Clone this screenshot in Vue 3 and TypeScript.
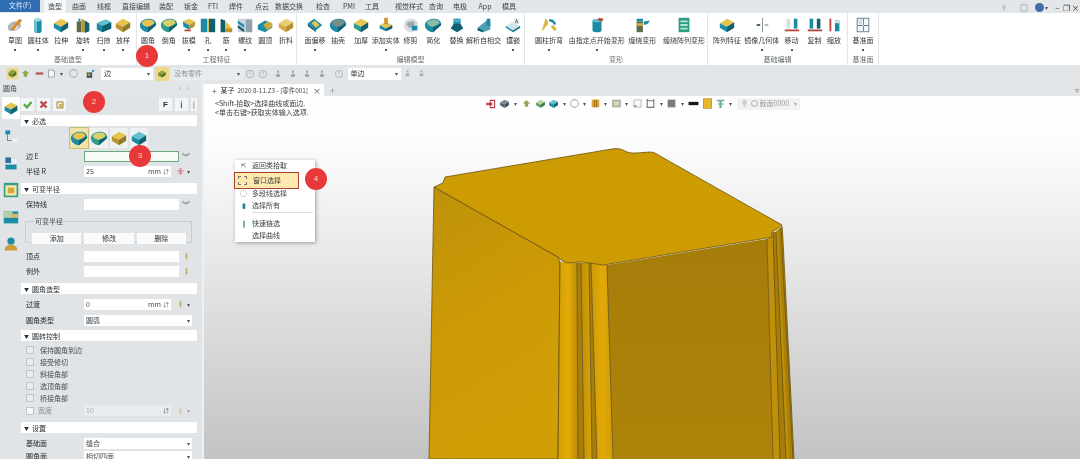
<script setup lang="ts">
import { h } from 'vue'

type Part = [string, string]

const TEAL = '#1c8ba5'
const DEEP = '#10606f'
const SKY = '#63c0d0'
const GOLD = '#e7c44e'
const OCHRE = '#b8952e'
const GREY = '#aeb8be'
const RED = '#b8423c'

const block = (top: string, left: string, right: string): Part[] => [
  ['M2 8l8-5 8 4-8 5Z', top],
  ['M2 8l8 4v6l-8-5Z', left],
  ['M10 12l8-5v6l-8 5Z', right],
]

const round = (top: string, left: string, right: string): Part[] => [
  ['M1 10C1 6 6 3 11 3c4 0 8 2 8 6 0 2-2 3-4 5l-5 4C6 18 1 15 1 10Z', left],
  ['M10 12c3-1 6-2 9-4v2l-9 8Z', right],
  ['M3 8c1-3 5-4 8-4 3 0 6 1 6 4-2 2-5 3-7 4-3 0-6-2-7-4Z', top],
]

const shapes: Record<string, Part[]> = {
  sketch: [
    ['M2 13c0-5 6-8 11-7s5 6 0 9-11 2-11-2Z', GREY],
    ['M6 13c0-2 3-4 6-3s1 5-2 5-4 0-4-2Z', '#eef1f3'],
    ['M6 13L15 3l3 2-9 10-4 1Z', '#d58d2c'],
  ],
  cyl: [
    ['M6 4h8v13a4 2 0 0 1-8 0Z', TEAL],
    ['M6 4h3v15c-2 0-3-1-3-2Z', SKY],
    ['M6 4a4 2 0 0 1 8 0 4 2 0 0 1-8 0', '#a5dbe4'],
  ],
  extrude: block(GOLD, TEAL, DEEP),
  revolve: [
    ['M3 6h5v12H3Z', '#5b6a44'],
    ['M8 3l4 2v13H8Z', OCHRE],
    ['M12 5l5 3v9l-5 2Z', DEEP],
    ['M5 3h2v3H5Z', TEAL],
  ],
  sweep: [
    ['M2 8l10-4 6 3v7L8 18l-6-3Z', TEAL],
    ['M8 11l10-4v7L8 18Z', DEEP],
    ['M2 8l10-4 6 3-10 4Z', SKY],
  ],
  loft: block(GOLD, OCHRE, '#8d7a2d'),
  fillet: round(GOLD, TEAL, DEEP),
  chamfer: round('#d8d06a', '#2a9c8f', DEEP),
  draft: [
    ['M3 6l7-3 7 3-7 4Z', GOLD],
    ['M3 6l7 4v5l-6-3Z', TEAL],
    ['M10 10l7-4-1 6-6 3Z', OCHRE],
    ['M5 15h7v2H5Z', RED],
  ],
  hole: [
    ['M2 3h7v15H2Z', TEAL],
    ['M9 3h2v15H9Z', GOLD],
    ['M11 3h7v15h-7Z', DEEP],
  ],
  rib: [
    ['M4 3l5 2v13H4Z', DEEP],
    ['M9 11l8 3v4H9Z', OCHRE],
    ['M9 5l8 9H9Z', GOLD],
  ],
  thread: [
    ['M2 3h16v15H2Z', '#c9d2d8'],
    ['M2 5l7 5v3L2 8Z', TEAL],
    ['M2 10l7 5v3l-7-5Z', DEEP],
    ['M11 4h7v14h-7Z', '#8fa3ad'],
  ],
  dome: [
    ['M2 10l8-5 8 3v5l-8 5-8-3Z', TEAL],
    ['M8 10l5-4 5 2v4l-5 4Z', '#c8ac3e'],
  ],
  fold: block('#eacb72', '#d5ad47', '#b88f32'),
  offset: [
    ['M2 8l7-5 9 7-7 6Z', TEAL],
    ['M6 8l4-3 5 5-4 3Z', GOLD],
    ['M2 8l9 8v2l-9-7Z', DEEP],
  ],
  shell: round('#7b8b85', TEAL, DEEP),
  thicken: block(GOLD, '#2f9a8f', DEEP),
  addsolid: [
    ['M3 10l7-3 7 3-7 4Z', GOLD],
    ['M3 10l7 4v3l-7-3Z', TEAL],
    ['M10 14l7-4v4l-7 3Z', DEEP],
    ['M8 2h4v7H8Z', '#d58d2c'],
  ],
  trim: [
    ['M2 10c0-5 5-7 9-7s7 3 7 7-4 8-8 8-8-3-8-8Z', '#d7dde0'],
    ['M5 9c2-3 6-4 9-2v5c-3 2-7 2-9-3Z', '#9ba9ae'],
    ['M11 11h6v5h-6Z', TEAL],
  ],
  simplify: round('#8ab9a4', TEAL, DEEP),
  replace: [
    ['M6 3h8v6H6Z', TEAL],
    ['M6 9h8l3 5-7 4-7-4Z', DEEP],
    ['M6 3l4 2 4-2v2l-4 2-4-2Z', SKY],
  ],
  intersect: [
    ['M3 13l10-8 4 2v8l-8 3-6-2Z', '#4d9fb5'],
    ['M13 3h4v8h-4Z', TEAL],
    ['M3 13l6 3v2l-6-2Z', DEEP],
  ],
  emboss: [
    ['M2 11l8-4 8 4-8 5Z', '#cfe5ea'],
    ['M2 11l8 5v2l-8-5Z', TEAL],
    ['M10 16l8-5v2l-8 5Z', DEEP],
    ['M11 2h6v7h-6Z', '#eef1f3'],
    ['M12 8l2-5 2 5h-1l-1-3-1 3Z', '#44525a'],
  ],
  bend: [
    ['M6 3c2 0 3 3 3 6l-6 7h12l-3-5c3-2 4 0 6 3v2H2l2-6c1-2 1-5 2-7Z', '#d9b63c'],
    ['M10 4c4-1 6 1 8 5l-2 1c-2-3-3-4-6-4Z', TEAL],
  ],
  point: [
    ['M5 5h10v11a5 2 0 0 1-10 0Z', TEAL],
    ['M5 5a5 2 0 0 1 10 0 5 2 0 0 1-10 0', SKY],
    ['M12 2l5 1-1 3-5-1Z', RED],
  ],
  wrap: [
    ['M4 6h7v12H4Z', '#5f6b4c'],
    ['M4 8h7v3H4Z', '#d9a948'],
    ['M4 3h7v3H4Z', TEAL],
    ['M12 6l7-1-3 4-4 1Z', TEAL],
  ],
  wraparray: [
    ['M4 2h12v16H4Z', '#2c9c83'],
    ['M6 5h8v2H6ZM6 9h8v2H6ZM6 13h8v2H6Z', '#b9e3d3'],
  ],
  pattern: block(GOLD, TEAL, DEEP),
  mirror: [
    ['M10 2h1v16h-1Z', '#7f8b92'],
    ['M4 9h4v2H4Z', '#44525a'],
    ['M13 9h4v2h-4Z', '#a8b4ba'],
  ],
  move: [
    ['M4 3h4v11H4Z', '#d6dcdf'],
    ['M12 3h4v11h-4Z', TEAL],
    ['M2 15h16v2H2Z', RED],
  ],
  copy: [
    ['M4 3h4v11H4Z', TEAL],
    ['M12 3h4v11h-4Z', DEEP],
    ['M2 15h16v2H2Z', RED],
  ],
  scale: [
    ['M5 3h2v14H5Z', RED],
    ['M11 5h5v12h-5Z', TEAL],
    ['M11 5h5v3h-5Z', '#d6dcdf'],
  ],
  plane: [
    ['M3 2h14v16H3Z', '#5d7f88'],
    ['M4 3h12v14H4Z', '#f4f6f7'],
    ['M10 3h1v14h-1ZM4 10h12v1H4Z', '#5d7f88'],
    ['M5 4h4v5H5Z', '#cfe0e4'],
  ],
  picker: [
    ['M1 1h18v18H1Z', '#ecd98a'],
    ['M4 8l6-4 6 3-6 4Z', '#8aa33d'],
    ['M4 8l6 3v5l-6-3Z', '#6b8a2f'],
    ['M10 11l6-4v5l-6 4Z', '#48701f'],
  ],
  arrow: [['M10 4l7 6h-4v6H7v-6H3Z', '#8aa84d']],
  minus: [['M3 8h14v4H3Z', '#b4505a']],
  sheet: [
    ['M4 3h9l3 3v11H4Z', '#f4f6f7'],
    ['M4 3h9l3 3v11H4Zm1 1v12h10V7l-3-3Z', '#5d6a72'],
  ],
  ring: [['M10 2a8 8 0 1 0 0 16 8 8 0 0 0 0-16Zm0 2a6 6 0 1 1 0 12 6 6 0 0 1 0-12Z', '#a9b2b7']],
  flag: [
    ['M3 8h10v10H3Z', '#4a565d'],
    ['M13 3l5 2-5 3Z', TEAL],
    ['M5 10h4v4H5Z', '#c9a227'],
  ],
  clock: [
    ['M10 2a8 8 0 1 0 0 16 8 8 0 0 0 0-16Zm0 2a6 6 0 1 1 0 12 6 6 0 0 1 0-12Z', '#a3acb1'],
    ['M9 5h2v6H9Z', '#a3acb1'],
  ],
  dim: [['M8 3h4v5H8ZM6 10h8v6H6Z', '#8d989e']],
  tick: [['M2 11l3-3 4 4 7-8 3 3L9 18Z', '#5aa54a']],
  cross: [['M3 6l3-3 4 4 4-4 3 3-4 4 4 4-3 3-4-4-4 4-3-3 4-4Z', '#c2494c']],
  apply: [
    ['M3 3h14v14H3Z', '#9f8a3d'],
    ['M5 5h10v10H5Z', '#f4efd6'],
    ['M8 8h7v7H8Z', '#cdb55a'],
  ],
  exit: [
    ['M8 3h9v14H8v-3h2v1h5V5h-5v1H8Z', '#b8424e'],
    ['M2 8h6V5l5 5-5 5v-3H2Z', '#b8424e'],
  ],
  shade: block('#7a8a97', '#51616d', '#3d4b55'),
  viewcube: block('#b7d9a0', '#6ba04c', '#3d7d5f'),
  bluecube: block(SKY, TEAL, DEEP),
  orange: [
    ['M3 3h14v14H3Z', '#e2a63a'],
    ['M7 3h2v14H7ZM11 3h2v14h-2Z', '#a3691f'],
  ],
  photo: [
    ['M2 3h16v14H2Z', '#aab39a'],
    ['M5 6h10v8H5Z', '#d3d8c0'],
  ],
  frame: [
    ['M3 3h14v14H3Z', '#7f8b92'],
    ['M4 4h12v12H4Z', '#f7f8f8'],
    ['M4 13h4v3H4Z', '#7f8b92'],
  ],
  cupframe: [['M3 2h2v2h10V2h2v16H3Zm2 4v10h10V6Z', '#6a757c']],
  greycube: [['M3 3h14v14H3Z', '#757d85']],
  blackbar: [['M1 7h18v6H1Z', '#15181a']],
  yellow: [
    ['M2 1h16v18H2Z', '#e7b52c'],
    ['M2 1h16v18H2Zm1 1v16h14V2Z', '#a8842a'],
  ],
  anchor: [['M3 3h14v3h-5v4h4v2h-4v6H8v-6H5v-2h3V6H3Z', '#6fa8a0']],
  tip: [['M10 2a5 5 0 0 0-3 9v3h6v-3a5 5 0 0 0-3-9ZM8 15h4v3H8Z', '#c4cacd']],
  pin: [['M8 3h4v8l3 2H5l3-2ZM9 13h2v5H9Z', '#c2ad6b']],
  pink: [['M8 2h4v5h5v3h-5v3h3l-5 5-5-5h3v-3H3V7h5Z', '#cf8a94']],
  tabfx: block(GOLD, TEAL, DEEP),
  tabtree: [
    ['M3 3h6v5H3Z', TEAL],
    ['M11 13h7v5h-7Z', '#eef1f3'],
    ['M5 8h1v7h5v1H5Z', '#5c6870'],
  ],
  tabhist: [
    ['M3 3h7v7H3Z', '#2f6f9c'],
    ['M3 12h14v6H3Z', TEAL],
    ['M12 5h5v5h-5Z', '#eef1f3'],
  ],
  tabframe: [
    ['M1 1h18v18H1Z', '#2f9c8e'],
    ['M3 4h14v13H3Z', '#f6e7a3'],
    ['M6 7h8v7H6Z', '#cda938'],
  ],
  tabscene: [
    ['M1 3h18v15H1Z', TEAL],
    ['M1 3h11v8H1Z', '#b8cfa6'],
    ['M11 6h8v5h-8Z', '#dab66a'],
  ],
  tabuser: [
    ['M10 2a4 4 0 1 1 0 9 4 4 0 0 1 0-9Z', TEAL],
    ['M2 18c0-5 4-7 8-7s8 2 8 7Z', '#c9a03a'],
  ],
}

const Ico = (props: { name: string; size?: number }) =>
  h(
    'svg',
    { viewBox: '0 0 20 20', width: props.size ?? 20, height: props.size ?? 20, class: 'ico' },
    (shapes[props.name] ?? []).map(([d, fill]) => h('path', { d, fill, 'fill-rule': 'evenodd' })),
  )
Ico.props = ['name', 'size']

const menus = [
  ['造型', 55], ['曲面', 79], ['线框', 104], ['直接编辑', 136], ['装配', 166], ['钣金', 191], ['FTI', 213],
  ['焊件', 236], ['点云', 262], ['数据交换', 289], ['检查', 323], ['PMI', 349], ['工具', 372], ['视觉样式', 409],
  ['查询', 436], ['电极', 460], ['App', 485], ['模具', 509],
] as const

interface Item { x: number; label?: string; icon?: string; drop?: boolean; w?: number; combo?: string; arrow?: boolean }

// widths from the midpoints between neighbouring centres, so the row stays plain flow
function spaced<T extends Item>(items: T[], solo = 24) {
  return items.map((it, i) => {
    const prev = items[i - 1]
    const next = items[i + 1]
    if (!prev && !next) return { ...it, w: solo }
    const left = prev ? (prev.x + it.x) / 2 : 0
    const right = next ? (it.x + next.x) / 2 : 0
    return { ...it, w: prev && next ? right - left : prev ? (it.x - left) * 2 : (right - it.x) * 2 }
  })
}

const groups = [
  {
    name: '基础造型', start: 0, end: 137,
    items: [
      { x: 15, label: '草图', icon: 'sketch', drop: true },
      { x: 38, label: '圆柱体', icon: 'cyl', drop: true },
      { x: 62, label: '拉伸', icon: 'extrude' },
      { x: 83, label: '旋转', icon: 'revolve', drop: true },
      { x: 104, label: '扫掠', icon: 'sweep', drop: true },
      { x: 123, label: '放样', icon: 'loft', drop: true },
    ],
  },
  {
    name: '工程特征', start: 137, end: 297,
    items: [
      { x: 148, label: '圆角', icon: 'fillet' },
      { x: 169, label: '倒角', icon: 'chamfer' },
      { x: 189, label: '拔模', icon: 'draft', drop: true },
      { x: 208, label: '孔', icon: 'hole', drop: true },
      { x: 226, label: '筋', icon: 'rib', drop: true },
      { x: 245, label: '螺纹', icon: 'thread', drop: true },
      { x: 265, label: '圆顶', icon: 'dome' },
      { x: 286, label: '折料', icon: 'fold' },
    ],
  },
  {
    name: '编辑模型', start: 297, end: 525,
    items: [
      { x: 315, label: '面偏移', icon: 'offset', drop: true },
      { x: 338, label: '抽壳', icon: 'shell' },
      { x: 361, label: '加厚', icon: 'thicken' },
      { x: 385, label: '添加实体', icon: 'addsolid', drop: true },
      { x: 412, label: '修剪', icon: 'trim' },
      { x: 433, label: '简化', icon: 'simplify' },
      { x: 455, label: '替换', icon: 'replace' },
      { x: 483, label: '解析自相交', icon: 'intersect' },
      { x: 513, label: '镶嵌', icon: 'emboss', drop: true },
    ],
  },
  {
    name: '变形', start: 525, end: 708,
    items: [
      { x: 545, label: '圆柱折弯', icon: 'bend', drop: true },
      { x: 593, label: '由指定点开始变形', icon: 'point', drop: true },
      { x: 640, label: '缠绕变形', icon: 'wrap' },
      { x: 680, label: '缠绕阵列变形', icon: 'wraparray' },
    ],
  },
  {
    name: '基础编辑', start: 708, end: 848,
    items: [
      { x: 727, label: '阵列特征', icon: 'pattern' },
      { x: 763, label: '镜像几何体', icon: 'mirror', drop: true },
      { x: 794, label: '移动', icon: 'move', drop: true },
      { x: 815, label: '复制', icon: 'copy' },
      { x: 834, label: '缩放', icon: 'scale' },
    ],
  },
  {
    name: '基准面', start: 848, end: 879,
    items: [{ x: 863, label: '基准面', icon: 'plane', drop: true }],
  },
].map((g) => ({ ...g, items: spaced(g.items) }))

const strip = spaced([
  { x: 12, icon: 'picker' },
  { x: 26, icon: 'arrow' },
  { x: 39, icon: 'minus' },
  { x: 52, icon: 'sheet' },
  { x: 61, arrow: true },
  { x: 72, icon: 'ring' },
  { x: 90, icon: 'flag' },
])
const stripEnd = spaced([
  { x: 247, icon: 'clock' },
  { x: 260, icon: 'clock' },
  { x: 276, icon: 'dim' },
  { x: 290, icon: 'dim' },
  { x: 304, icon: 'dim' },
  { x: 318, icon: 'dim' },
  { x: 336, icon: 'clock' },
])

const viewbar = spaced([
  { x: 490, icon: 'exit' },
  { x: 504, icon: 'shade' },
  { x: 514, arrow: true },
  { x: 525, icon: 'arrow' },
  { x: 539, icon: 'viewcube' },
  { x: 553, icon: 'bluecube' },
  { x: 563, arrow: true },
  { x: 574, icon: 'ring' },
  { x: 583, arrow: true },
  { x: 595, icon: 'orange' },
  { x: 604, arrow: true },
  { x: 616, icon: 'photo' },
  { x: 624, arrow: true },
  { x: 636, icon: 'frame' },
  { x: 651, icon: 'cupframe' },
  { x: 659, arrow: true },
  { x: 672, icon: 'greycube' },
  { x: 680, arrow: true },
  { x: 692, icon: 'blackbar' },
  { x: 707, icon: 'yellow' },
  { x: 720, icon: 'anchor' },
  { x: 729, arrow: true },
])

const sideTabs = ['tabfx', 'tabtree', 'tabhist', 'tabframe', 'tabscene', 'tabuser']
const checks = ['保持圆角到边', '接受修切', '斜接角部', '选顶角部', '桥接角部']
const menuItems = ['多段线选择', '选择所有']
</script>

<template>
  <div class="app">
    <!-- top menu -->
    <div class="menubar">
      <div class="file">文件(F)</div>
      <div class="active-tab"></div>
      <span
        v-for="m in menus"
        :key="m[0]"
        class="menu"
        :style="{ left: m[1] + 'px' }"
      >{{ m[0] }}</span>
      <div class="winbtns">
        <Ico name="tip" :size="8" />
        <span class="ring-wrap"><Ico name="ring" :size="10" /></span>
        <span class="globe"></span>
        <span class="dd">▾</span>
        <span class="wb">–</span>
        <span class="wb">❐</span>
        <span class="wb">×</span>
      </div>
    </div>

    <!-- ribbon -->
    <div class="ribbon">
      <div
        v-for="g in groups"
        :key="g.name"
        class="group"
        :style="{ width: g.end - g.start + 'px' }"
      >
        <div class="group-items" :style="{ paddingLeft: g.items[0].x - g.items[0].w / 2 - g.start + 'px' }">
          <div v-for="it in g.items" :key="it.label" class="ritem" :style="{ width: it.w + 'px' }">
            <Ico :name="it.icon!" :size="18" />
            <span class="rlabel">{{ it.label }}</span>
            <span v-if="it.drop" class="rdot"></span>
          </div>
        </div>
        <div class="group-name">{{ g.name }}</div>
      </div>
    </div>

    <!-- selection toolbar -->
    <div class="strip">
      <div class="slots">
        <div v-for="(s, i) in strip" :key="i" class="slot" :style="{ width: s.w + 'px' }">
          <Ico v-if="s.icon" :name="s.icon" :size="s.icon === 'picker' ? 13 : 11" />
          <span v-else class="dd">▾</span>
        </div>
      </div>
      <div class="combo edge"><span>边</span><span class="dd">▾</span></div>
      <div class="slot wide"><span class="picked"><Ico name="picker" :size="12" /></span></div>
      <div class="combo parts"><span>没有零件</span><span class="dd">▾</span></div>
      <div class="slots dim">
        <div v-for="(s, i) in stripEnd" :key="i" class="slot" :style="{ width: s.w + 'px' }">
          <Ico :name="s.icon!" :size="10" />
        </div>
      </div>
      <div class="combo single"><span>单边</span><span class="dd">▾</span></div>
      <div class="slot tail"><Ico name="dim" :size="9" /></div>
      <div class="slot tail"><Ico name="dim" :size="9" /></div>
    </div>

    <div class="work">
      <!-- fillet panel -->
      <aside class="panel">
        <div class="panel-title">
          <span>圆角</span>
          <span class="pins">▫ ▫</span>
        </div>
        <div class="panel-main">
          <div class="side-tabs">
            <div v-for="(t, i) in sideTabs" :key="t" class="side-tab" :class="{ on: i === 0 }">
              <Ico :name="t" :size="16" />
            </div>
          </div>
          <div class="form">
            <div class="actions">
              <span class="act"><Ico name="tick" :size="11" /></span>
              <span class="act"><Ico name="cross" :size="11" /></span>
              <span class="act"><Ico name="apply" :size="10" /></span>
              <span class="act right bold">F</span>
              <span class="act info">i</span>
              <span class="act thin">|</span>
            </div>

            <div class="section first"><i>▼</i>必选</div>
            <div class="types">
              <span class="type on"><Ico name="fillet" :size="18" /></span>
              <span class="type"><Ico name="chamfer" :size="18" /></span>
              <span class="type"><Ico name="loft" :size="18" /></span>
              <span class="type"><Ico name="bluecube" :size="18" /></span>
            </div>
            <div class="field mt3">
              <label>边 E</label>
              <div class="input green"></div>
              <span class="more">︾</span>
            </div>
            <div class="field mt4">
              <label>半径 R</label>
              <div class="input short"><span>25</span><span class="unit">mm</span><span class="spin">⇵</span></div>
              <span class="side"><Ico name="pink" :size="9" /><span class="dd">▾</span></span>
            </div>

            <div class="section"><i>▼</i>可变半径</div>
            <div class="field mt5">
              <label>保持线</label>
              <div class="input"></div>
              <span class="more">︾</span>
            </div>
            <fieldset class="box">
              <legend>可变半径</legend>
              <button>添加</button>
              <button>修改</button>
              <button>删除</button>
            </fieldset>
            <div class="field mt8">
              <label>顶点</label>
              <div class="input"></div>
              <span class="more"><Ico name="pin" :size="9" /></span>
            </div>
            <div class="field mt4">
              <label>例外</label>
              <div class="input"></div>
              <span class="more"><Ico name="pin" :size="9" /></span>
            </div>

            <div class="section"><i>▼</i>圆角造型</div>
            <div class="field mt5">
              <label>过渡</label>
              <div class="input short"><span>0</span><span class="unit">mm</span><span class="spin">⇵</span></div>
              <span class="side"><Ico name="pin" :size="9" /><span class="dd">▾</span></span>
            </div>
            <div class="field mt5">
              <label>圆角类型</label>
              <div class="input wide"><span>圆弧</span><span class="dd end">▾</span></div>
            </div>

            <div class="section tight"><i>▼</i>圆转控制</div>
            <div class="checks">
              <div v-for="c in checks" :key="c" class="check"><span class="cb"></span>{{ c }}</div>
            </div>
            <div class="field mt1">
              <label class="with-cb"><span class="cb light"></span>宽度</label>
              <div class="input short off"><span>10</span><span class="spin">⇵</span></div>
              <span class="side faded"><Ico name="pin" :size="9" /><span class="dd">▾</span></span>
            </div>

            <div class="section"><i>▼</i>设置</div>
            <div class="field mt5">
              <label>基础面</label>
              <div class="input wide"><span>缝合</span><span class="dd end">▾</span></div>
            </div>
            <div class="field mt2">
              <label>圆角面</label>
              <div class="input wide"><span>相切四面</span><span class="dd end">▾</span></div>
            </div>
          </div>
        </div>
      </aside>

      <main class="main">
        <div class="doc-tabs">
          <div class="doc-tab">
            <span class="plus">+</span><span class="doc-name">某子</span><span class="doc-file">2020 8-11.Z3 - [零件001]</span><span class="close">×</span>
          </div>
          <span class="add">+</span>
          <span class="collapse">▿</span>
        </div>
        <div class="canvas">
          <!-- the part: free canvas, coordinates are the scene itself -->
          <svg class="scene" viewBox="204 96 876 363" width="876" height="363">
            <defs>
              <linearGradient id="leftFace" x1="0" y1="0" x2="0.3" y2="1">
                <stop offset="0" stop-color="#bd9109" />
                <stop offset="0.45" stop-color="#cb9907" />
                <stop offset="1" stop-color="#d09e05" />
              </linearGradient>
              <linearGradient id="rightFace" x1="0" y1="0" x2="0" y2="1">
                <stop offset="0" stop-color="#a67d0a" />
                <stop offset="1" stop-color="#ae8309" />
              </linearGradient>
              <linearGradient id="fluteA" x1="0" y1="0" x2="1" y2="0">
                <stop offset="0" stop-color="#d3a006" />
                <stop offset="0.5" stop-color="#e3aa08" />
                <stop offset="1" stop-color="#b98c08" />
              </linearGradient>
              <linearGradient id="fluteB" x1="0" y1="0" x2="1" y2="0">
                <stop offset="0" stop-color="#bd8f08" />
                <stop offset="1" stop-color="#d9a408" />
              </linearGradient>
              <linearGradient id="fluteC" x1="0" y1="0" x2="1" y2="0">
                <stop offset="0" stop-color="#cb9a07" />
                <stop offset="0.5" stop-color="#e2aa08" />
                <stop offset="1" stop-color="#cf9d06" />
              </linearGradient>
            </defs>
            <path d="M434 187L558 257 560 262 558 459H429Z" fill="url(#leftFace)" stroke="#6f5510" stroke-width="0.8" />
            <path d="M560 262L577 263 578 459H558Z" fill="url(#fluteA)" />
            <path d="M577 263L581 263 584 459 578 459Z" fill="#a87f0a" />
            <path d="M581 263L589 263 592 459 584 459Z" fill="url(#fluteB)" />
            <path d="M589 263L591 263 597 459 592 459Z" fill="#a87f0a" />
            <path d="M591 263L607 265 613 459 597 459Z" fill="url(#fluteC)" />
            <path d="M607 265L767 239 773 459H613Z" fill="url(#rightFace)" />
            <path d="M767 239L782 226 783 240 794 459H773Z" fill="#c09108" />
            <path d="M773 232L776 232 786 459H780Z" fill="#a57d0a" />
            <path d="M778 230L781 228 793 459H789Z" fill="#a8800a" />
            <path
              d="M434 187L443 183 445 177 612 149C617 148 622 149 625 151 630 154 636 153 650 152 654 152 657 154 660 156L782 225 777 229 772 232 772 237 767 238 603 265 590 263 580 262 567 263C563 262 560 259 558 257Z"
              fill="#cd9c02"
              stroke="#6b5210"
              stroke-width="0.8"
              stroke-linejoin="round"
            />
            <g fill="none" stroke="#6a5010" stroke-width="0.8">
              <path d="M560 262L558 459" />
              <path d="M577 263L578 459" />
              <path d="M581 263L584 459" />
              <path d="M589 263L592 459" />
              <path d="M591 263L597 459" />
              <path d="M607 265L613 459" />
              <path d="M767 239L773 459" />
              <path d="M773 232L780 459" />
              <path d="M776 232L786 459" />
              <path d="M781 228L793 459" />
              <path d="M782 226L783 240 794 459" />
            </g>
          </svg>

          <div class="hints">
            <div>&lt;Shift-拾取&gt;选择曲线或面边.</div>
            <div>&lt;单击右键&gt;获取实体输入选项.</div>
          </div>

          <div class="viewbar">
            <div v-for="(s, i) in viewbar" :key="i" class="slot" :style="{ width: s.w + 'px' }">
              <Ico v-if="s.icon" :name="s.icon" :size="s.icon === 'exit' ? 12 : 11" />
              <span v-else class="dd">▾</span>
            </div>
            <div class="section-box"><Ico name="tip" :size="9" /><span class="ring-o"></span>截面0000<span class="dd">▾</span></div>
          </div>
        </div>
      </main>
    </div>

    <!-- context menu with highlighted entry -->
    <div class="ctx">
      <div class="ctx-row head"><span class="ctx-ic">⇱</span>返回类拾取</div>
      <div class="ctx-row hot"><span class="ctx-box"></span>窗口选择</div>
      <div v-for="(m, i) in menuItems" :key="m" class="ctx-row">
        <span class="ctx-ic" :class="{ teal: i === 1 }">{{ i === 0 ? '◯' : '▮' }}</span>{{ m }}
      </div>
      <div class="ctx-sep"></div>
      <div class="ctx-row"><span class="ctx-ic teal">❙</span>快速链选</div>
      <div class="ctx-row"><span class="ctx-ic"></span>选择曲线</div>
    </div>

    <span class="badge b1">1</span>
    <span class="badge b2">2</span>
    <span class="badge b3">3</span>
    <span class="badge b4">4</span>
  </div>
</template>

<style scoped>
.app {
  position: relative;
  width: 1080px;
  height: 459px;
  overflow: hidden;
  display: flex;
  flex-direction: column;
  background: #e3e6e8;
  color: #2c3033;
  font: 7px "Noto Sans CJK SC", "Liberation Sans", sans-serif;
  line-height: 11px;
  filter: blur(0.3px);
}

.ico {
  display: block;
  flex: none;
}

.dd {
  font-size: 6px;
  color: #555;
}

/* menu */
.menubar {
  position: relative;
  flex: none;
  height: 13px;
  background: #e4e7e9;
}

.file {
  width: 40px;
  height: 12px;
  background: #2f6db3;
  color: #dfe9f5;
  text-align: center;
}

.active-tab {
  position: absolute;
  left: 44px;
  top: 0;
  width: 22px;
  height: 13px;
  background: #f6f7f8;
}

.menu {
  position: absolute;
  top: 1px;
  transform: translateX(-50%);
  white-space: nowrap;
  color: #3f4447;
}

.winbtns {
  position: absolute;
  right: 0;
  top: 2px;
  display: flex;
  align-items: center;
  color: #444;
}

.ring-wrap {
  margin-left: 11px;
}

.globe {
  width: 9px;
  height: 9px;
  margin-left: 6px;
  border-radius: 50%;
  background: #3f6ea8;
}

.winbtns .dd {
  margin: 0 5px 0 1px;
}

.wb {
  width: 9px;
  text-align: center;
  font-size: 8px;
  color: #333;
}

/* ribbon */
.ribbon {
  flex: none;
  display: flex;
  height: 52px;
  background: #fff;
}

.group {
  position: relative;
  flex: none;
  border-right: 1px solid #e3e6e8;
  box-sizing: border-box;
}

.group-items {
  display: flex;
  height: 41px;
  padding-top: 3px;
}

.ritem {
  flex: none;
  display: flex;
  flex-direction: column;
  align-items: center;
  white-space: nowrap;
}

.rlabel {
  margin-top: 1px;
  color: #33373a;
}

.rdot {
  width: 2px;
  height: 2px;
  margin-top: 3px;
  background: #555;
}

.group-name {
  position: absolute;
  bottom: 0;
  left: 0;
  right: 0;
  text-align: center;
  color: #666b6f;
}

/* selection strip */
.strip {
  flex: none;
  display: flex;
  align-items: center;
  height: 17px;
  padding-left: 5px;
}

.slots {
  display: flex;
  align-items: center;
}

.slot {
  flex: none;
  display: flex;
  align-items: center;
  justify-content: center;
}

.slot.wide {
  width: 18px;
}

.slot.tail {
  width: 14px;
  opacity: 0.7;
}

.picked {
  background: #ecd98a;
  padding: 1px;
}

.combo {
  flex: none;
  display: flex;
  align-items: center;
  justify-content: space-between;
  box-sizing: border-box;
  height: 12px;
  padding: 0 3px;
  background: #fff;
  color: #333;
}

.combo.edge {
  width: 52px;
  margin-left: 2px;
}

.combo.parts {
  width: 72px;
  background: #e9ecee;
  color: #8c9194;
}

.combo.single {
  width: 53px;
}

.dim {
  opacity: 0.75;
}

/* workspace */
.work {
  flex: 1;
  display: flex;
  min-height: 0;
}

.panel {
  flex: none;
  width: 202px;
  display: flex;
  flex-direction: column;
  background: #e0e4e6;
  border-right: 2px solid #eef0f1;
  box-sizing: content-box;
}

.panel-title {
  flex: none;
  display: flex;
  justify-content: space-between;
  height: 14px;
  padding: 1px 10px 0 3px;
  box-sizing: border-box;
  color: #44484b;
  background: #e3e6e8;
}

.pins {
  color: #8b9196;
}

.panel-main {
  flex: 1;
  display: flex;
}

.side-tabs {
  flex: none;
  width: 20px;
  padding-top: 1px;
  display: flex;
  flex-direction: column;
  align-items: center;
  gap: 7px;
}

.side-tab {
  width: 18px;
  height: 20px;
  display: flex;
  align-items: center;
  justify-content: center;
  margin-left: 2px;
}

.side-tab.on {
  background: #fff;
  height: 22px;
}

.form {
  flex: 1;
  width: 177px;
  padding-right: 5px;
  padding-left: 1px;
  box-sizing: border-box;
}

.actions {
  display: flex;
  align-items: center;
  height: 15px;
  margin-top: 1px;
  gap: 3px;
  padding-left: 0;
}

.act {
  width: 13px;
  height: 13px;
  display: flex;
  align-items: center;
  justify-content: center;
  background: #f4f5f6;
}

.act.right {
  margin-left: auto;
}

.bold {
  font-weight: 700;
  font-size: 8px;
  font-family: "Liberation Sans", sans-serif;
}

.info {
  background: #f4f5f6;
  color: #2b66ad;
  font-weight: 700;
  font-size: 8px;
}

.thin {
  width: 6px;
}

.section {
  height: 11px;
  margin-top: 6px;
  background: #fff;
  color: #2c3033;
}

.section.first {
  margin-top: 3px;
}

.section.tight {
  margin-top: 4px;
}

.section i {
  font-style: normal;
  font-size: 5px;
  margin: 0 3px 0 3px;
  vertical-align: 1px;
}

.types {
  display: flex;
  gap: 2px;
  height: 20px;
  margin-top: 2px;
  padding-left: 49px;
}

.type {
  width: 18px;
  height: 20px;
  display: flex;
  align-items: center;
  justify-content: center;
  background: #eef1f2;
}

.type.on {
  background: #efe3a8;
  outline: 1px solid #cdbd77;
}

.field {
  display: flex;
  align-items: center;
  height: 11px;
}

.mt1 { margin-top: 1px; }
.mt2 { margin-top: 2px; }
.mt3 { margin-top: 3px; }
.mt4 { margin-top: 4px; }
.mt5 { margin-top: 5px; }
.mt8 { margin-top: 8px; }

.field label {
  flex: none;
  width: 63px;
  padding-left: 5px;
  box-sizing: border-box;
  color: #26292c;
}

.input {
  flex: none;
  display: flex;
  align-items: center;
  box-sizing: border-box;
  width: 95px;
  height: 11px;
  padding: 0 2px;
  background: #fff;
  color: #44484b;
}

.input.green {
  border: 1px solid #6ea77e;
  background: #f7fbf6;
}

.input.short {
  width: 87px;
}

.input.wide {
  width: 108px;
}

.input.off {
  background: #e9ecee;
  color: #aaa;
}

.unit {
  margin-left: auto;
  margin-right: 2px;
}

.spin {
  font-size: 6px;
  margin-left: auto;
  color: #666;
}

.unit + .spin {
  margin-left: 0;
}

.end {
  margin-left: auto;
}

.more {
  width: 14px;
  display: flex;
  justify-content: center;
  color: #666;
  font-size: 8px;
}

.side {
  display: flex;
  align-items: center;
  gap: 2px;
  margin-left: 5px;
}

.faded {
  opacity: 0.5;
}

.box {
  display: flex;
  gap: 3px;
  height: 26px;
  margin: 7px 5px 0 4px;
  padding: 8px 5px 0 6px;
  box-sizing: border-box;
  border: 1px solid #c6cbce;
  border-bottom-color: #cdd2d4;
  min-width: 0;
}

.box legend {
  padding: 0 1px;
  margin-left: 2px;
  font-size: 7px;
  line-height: 8px;
  color: #44484b;
}

.box button {
  flex: 1;
  height: 11px;
  padding: 0;
  border: 0;
  background: #fbfbfc;
  color: #2c3033;
  font: inherit;
  line-height: 11px;
}

.checks {
  margin-top: 3px;
}

.check {
  display: flex;
  align-items: center;
  height: 12px;
  padding-left: 5px;
  color: #484c4f;
}

.cb {
  flex: none;
  width: 6px;
  height: 6px;
  margin-right: 6px;
  border: 1px solid #c0c5c8;
  background: #e9ebec;
}

.with-cb {
  display: flex;
  align-items: center;
  color: #8c9093 !important;
}

.cb.light {
  background: #f6f7f7;
  margin-right: 4px;
}

/* right side */
.main {
  flex: 1;
  display: flex;
  flex-direction: column;
  min-width: 0;
}

.doc-tabs {
  position: relative;
  flex: none;
  display: flex;
  align-items: flex-end;
  height: 14px;
}

.doc-tab {
  display: flex;
  align-items: center;
  width: 120px;
  height: 12px;
  padding-left: 8px;
  box-sizing: border-box;
  background: #fff;
  color: #44484b;
  white-space: nowrap;
}

.doc-name {
  margin-right: 3px;
  color: #26292c;
}

.doc-file {
  font-size: 6.4px;
}

.plus {
  margin-right: 4px;
  font-size: 8px;
}

.close {
  margin-left: 5px;
  font-size: 8px;
}

.add {
  margin-left: 6px;
  font-size: 9px;
  color: #8e9396;
}

.collapse {
  position: absolute;
  right: 1px;
  top: 2px;
  color: #777;
  font-size: 8px;
}

.canvas {
  position: relative;
  flex: 1;
  min-height: 0;
  padding: 3px 0 0 11px;
  background: linear-gradient(#fff 0, #fcfcfc 14%, #c3c3c3 100%);
}

.scene {
  position: absolute;
  left: 0;
  top: 0;
}

.hints {
  position: relative;
  line-height: 9px;
  color: #3a3d40;
}

.viewbar {
  position: absolute;
  left: 280px;
  top: 1px;
  display: flex;
  align-items: center;
  height: 13px;
}

.section-box {
  display: flex;
  align-items: center;
  gap: 2px;
  width: 63px;
  height: 12px;
  margin-left: 2px;
  box-sizing: border-box;
  padding: 0 3px;
  background: #f1f2f3;
  color: #9a9ea1;
}

.section-box .dd {
  margin-left: auto;
  color: #aaa;
}

.ring-o {
  width: 5px;
  height: 5px;
  border: 1px solid #aaa;
  border-radius: 50%;
}

/* context menu */
.ctx {
  position: absolute;
  left: 235px;
  top: 160px;
  width: 80px;
  height: 82px;
  box-sizing: border-box;
  background: #fff;
  box-shadow: 1px 1px 4px rgba(0, 0, 0, 0.35);
  color: #3a3d40;
}

.ctx-row {
  display: flex;
  align-items: center;
  height: 12px;
}

.ctx-row.head {
  height: 10px;
}

.ctx-ic {
  width: 17px;
  text-align: center;
  font-size: 7px;
  color: #666;
}

.teal {
  color: #1c7f8f;
}

.ctx-row.hot {
  position: relative;
  height: 17px;
  margin: 2px 16px -2px -1px;
  box-sizing: border-box;
  border: 1.5px solid #a8432c;
  background: #ffe9ae;
}

.ctx-box {
  width: 7px;
  height: 7px;
  margin: 0 6px 0 3px;
  border: 1px dashed #777;
}

.ctx-sep {
  height: 1px;
  margin: 1px 2px 4px 17px;
  background: #ddd;
}

.badge {
  position: absolute;
  width: 22px;
  height: 22px;
  margin: -11px 0 0 -11px;
  border-radius: 50%;
  background: #e8383a;
  color: #fbd9c0;
  font: 8px/22px "Liberation Sans", sans-serif;
  text-align: center;
}

.b1 { left: 147px; top: 56px; }
.b2 { left: 94px; top: 102px; }
.b3 { left: 140px; top: 156px; }
.b4 { left: 316px; top: 179px; }
</style>
